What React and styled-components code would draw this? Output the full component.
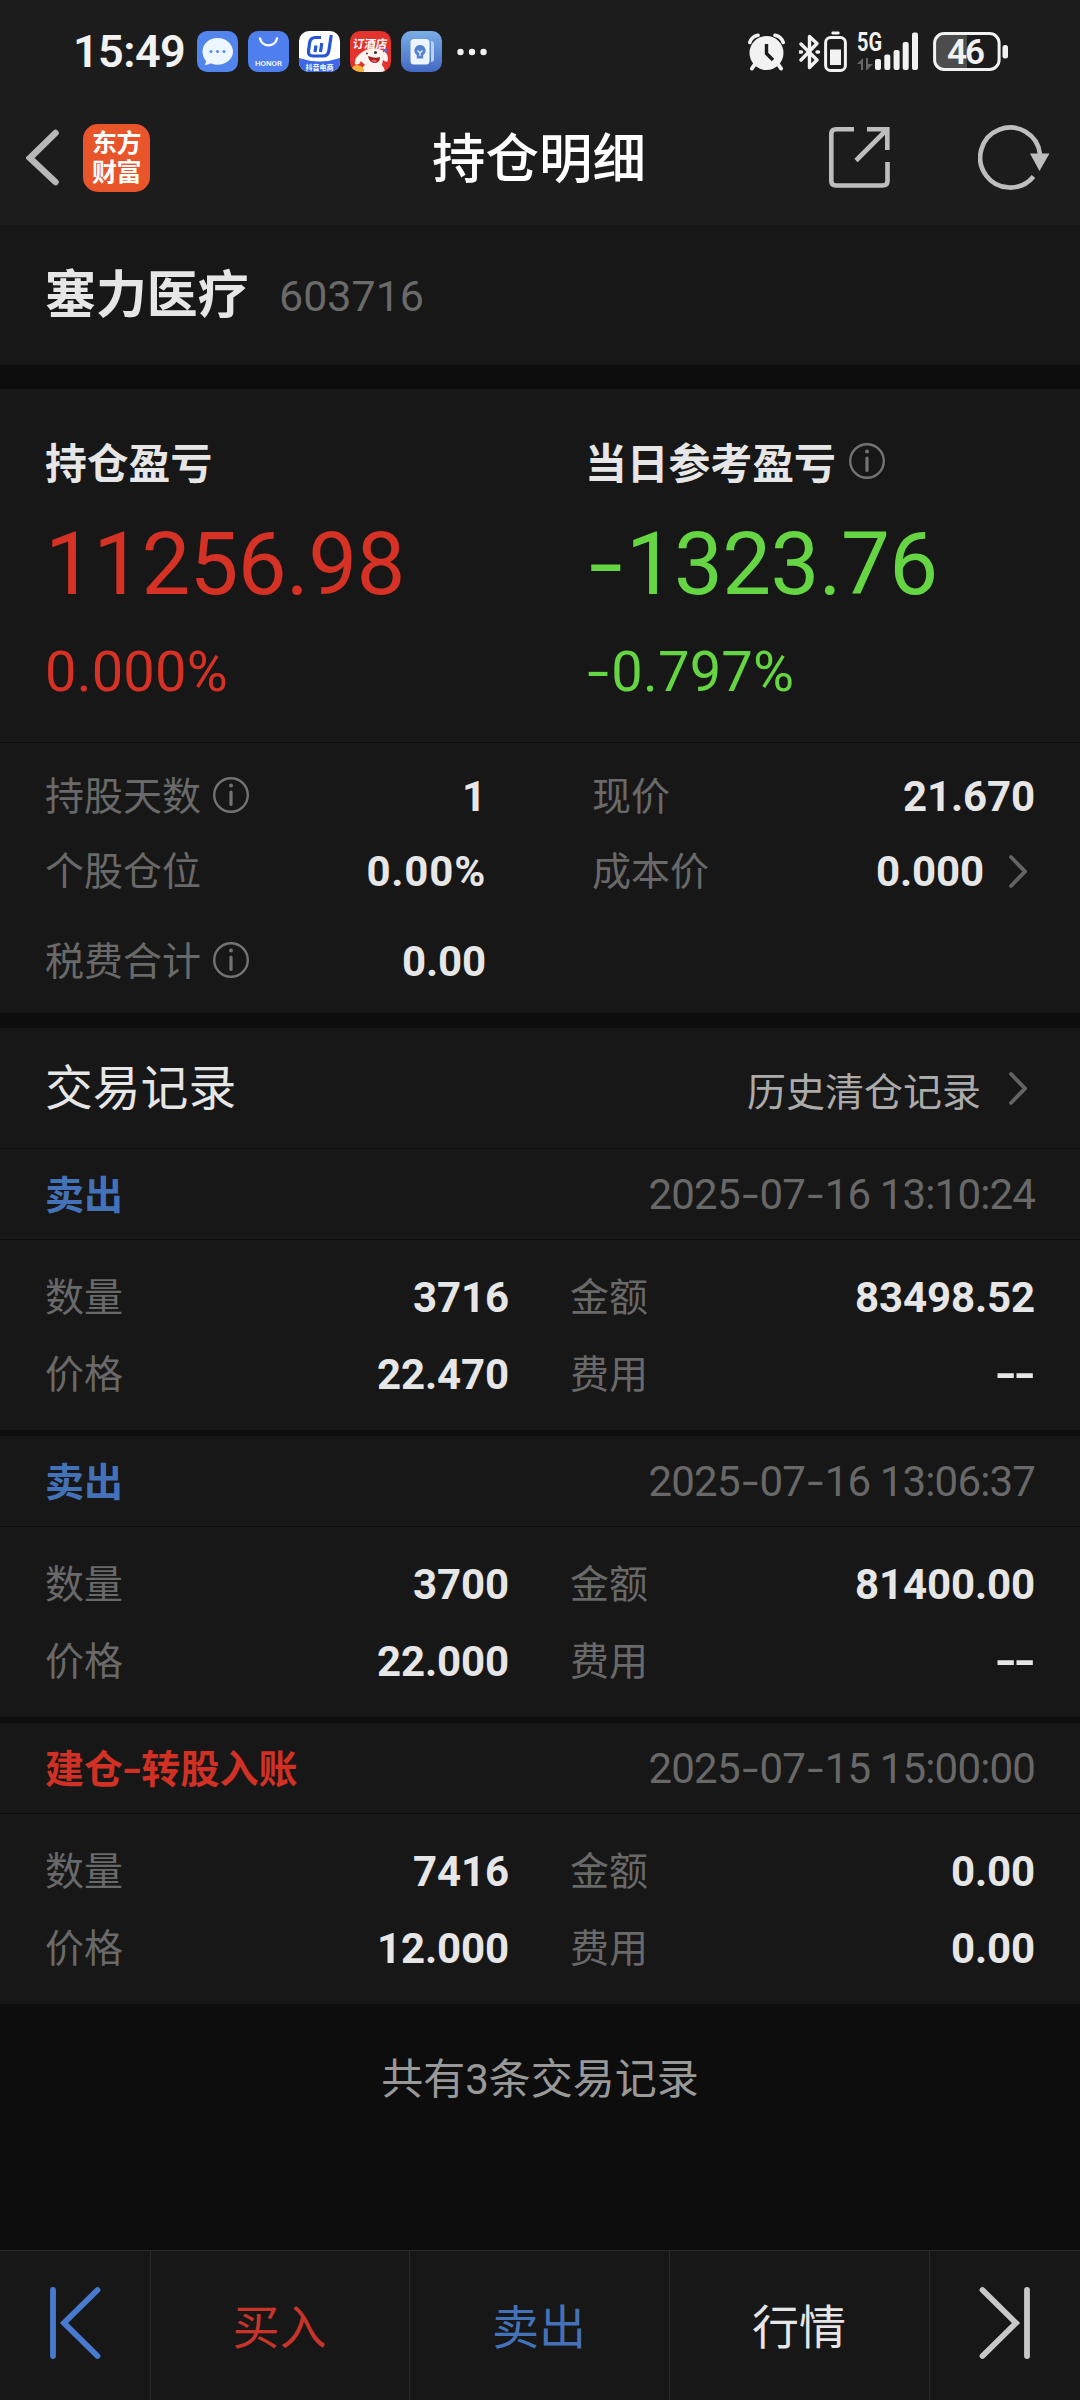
import React from 'react';
import styled, { createGlobalStyle } from 'styled-components'

const GlobalStyle = createGlobalStyle`
    * { box-sizing: border-box; }
    body {
        margin: 0;
        background: #0d0d0d;
        font-family: Roboto, "Noto Sans CJK SC", sans-serif;
        color: #e6e6e6;
    }
    svg { display: block; flex: none; }
`

const records = [
    { id: 1, type: '卖出', color: '#4472b8', time: '2025-07-16 13:10:24', count: '3716', amount: '83498.52', price: '22.470', fee: '--' },
    { id: 2, type: '卖出', color: '#4472b8', time: '2025-07-16 13:06:37', count: '3700', amount: '81400.00', price: '22.000', fee: '--' },
    { id: 3, type: '建仓-转股入账', color: '#d13024', time: '2025-07-15 15:00:00', count: '7416', amount: '0.00', price: '12.000', fee: '0.00' },
]

// Hyphens are drawn wider than Roboto has them
const withDash = (text) => text.split('').map((c, i) => (
    c === '-' ? <Dash key={i}>-</Dash> : c
))

function InfoIcon() {
    return (
        <svg width="36" height="38" viewBox="0 0 36 38" fill="none" stroke="#737373">
            <circle cx="18" cy="19" r="16.8" strokeWidth="2.4" />
            <path d="M18 16v12.5" strokeWidth="3.2" strokeLinecap="round" />
            <circle cx="18" cy="9.6" r="2" fill="#737373" stroke="none" />
        </svg>
    )
}

function Arrow() {
    return (
        <svg width="18" height="34" viewBox="0 0 18 34" fill="none" stroke="#636363" strokeWidth="3.8" strokeLinecap="round">
            <path d="M2 2L16 16.5L2 31" />
        </svg>
    )
}

function StatusBar() {
    return (
        <Status>
            <Clock>15:49</Clock>
            <Apps>
                <svg width="41" height="41" viewBox="0 0 41 41">
                    <rect width="41" height="41" rx="10" fill="#5284ee" />
                    <path d="M20.5 7C12 7 5.5 13 5.5 20.7c0 4 1.6 7 3.7 9.3-.2 1.5-.8 2.8-1.7 4 2.5 0 4.5-.7 6-1.7 2 .9 4.4 1.5 7 1.5 8.500 0 15.5-5.8 15.5-13.3S29 7 20.5 7z" fill="#eef6ff" />
                    <g fill="#5b8cf0"><circle cx="14" cy="20.5" r="1.6" /><circle cx="20.5" cy="20.5" r="1.6" /><circle cx="27" cy="20.5" r="1.6" /></g>
                </svg>
                <svg width="41" height="41" viewBox="0 0 41 41">
                    <rect width="41" height="41" rx="10" fill="#4f7fee" />
                    <path d="M12 7.5a8.7 8.7 0 0 0 17 0" fill="none" stroke="#fff" strokeWidth="2.4" strokeLinecap="round" />
                    <text x="20.5" y="35" textAnchor="middle" fontSize="7" fontWeight="500" fill="#fff" textLength="27" lengthAdjust="spacingAndGlyphs">HONOR</text>
                </svg>
                <svg width="41" height="41" viewBox="0 0 41 41">
                    <defs><clipPath id="shop"><rect width="41" height="41" rx="10" /></clipPath></defs>
                    <g clipPath="url(#shop)">
                        <rect width="41" height="41" fill="#fff" />
                        <path d="M0 27Q20.5 34 41 27V41H0z" fill="#3c68e8" />
                        <path d="M22 6.5H16.5Q11.5 6.5 10.7 11.5L9.5 20Q9 25 14 25H24Q29 25 29.8 20L32.3 4M17 14.5L16 21M22.8 12L21.5 21" fill="none" stroke="#2655d8" strokeWidth="3.2" />
                        <text x="20.5" y="38.5" textAnchor="middle" fontSize="7" fontWeight="700" fill="#fff">抖音电商</text>
                    </g>
                </svg>
                <svg width="41" height="41" viewBox="0 0 41 41">
                    <defs><clipPath id="dog"><rect width="41" height="41" rx="10" /></clipPath></defs>
                    <g clipPath="url(#dog)">
                        <rect width="41" height="41" fill="#e4322c" />
                        <text x="20" y="17" textAnchor="middle" fontSize="11.5" fontWeight="700" fill="#fff" transform="skewX(-8) translate(2 0)">订酒店</text>
                        <path d="M11 22q-7 5-6 11 4 2 6-3l4 4q-4 3-4 8h24q0-5-3-8l1-5q5 4 5-1 0-6-6-9-12-4-21 3z" fill="#fff4f0" />
                        <path d="M18 25q7 3 12 1 0 6-6 6-5-1-6-7z" fill="#a51e22" />
                        <path d="M21 29q4-1 6 1-2 3-6-1z" fill="#f4625f" />
                        <circle cx="17" cy="22.5" r="0.9" fill="#333" /><circle cx="25.5" cy="21.5" r="1.5" fill="#333" />
                        <path d="M2 41v-4q3-5 8-2 4 0 4 6z" fill="#f2b23e" />
                        <path d="M33 18l4 3m0-3l-4 3" stroke="#5d6fd0" strokeWidth="1.5" />
                    </g>
                </svg>
                <svg width="41" height="41" viewBox="0 0 41 41">
                    <defs><linearGradient id="tips" x2="0" y2="1"><stop stopColor="#7aaee6" /><stop offset="1" stopColor="#4369c4" /></linearGradient></defs>
                    <rect width="41" height="41" rx="10" fill="url(#tips)" />
                    <path d="M30 10q3 0 3 3v15q0 3-3 3z" fill="#b8d0f3" />
                    <rect x="9.5" y="8" width="19" height="25.5" rx="3.5" fill="#eef4ff" />
                    <path d="M19 14a5.5 5.5 0 0 0-3.2 10v3.5h6.4V24A5.5 5.5 0 0 0 19 14z" fill="#5581d0" />
                    <path d="M16.5 19.5l2.5 2.5 2.5-2.5M19 22v3" fill="none" stroke="#eef4ff" strokeWidth="1.2" />
                </svg>
            </Apps>
            <svg width="30" height="8" viewBox="0 0 30 8" fill="#f2f2f2">
                <circle cx="3.5" cy="4" r="3.2" /><circle cx="15" cy="4" r="3.2" /><circle cx="26.5" cy="4" r="3.2" />
            </svg>
            <Signals>
                <svg width="37" height="38" viewBox="0 0 37 38" fill="none" stroke="#f2f2f2">
                    <path d="M7 31l-3 4.5M30 31l3 4.5" strokeWidth="4" strokeLinecap="round" />
                    <circle cx="18.5" cy="20" r="17" fill="#f2f2f2" stroke="none" />
                    <path d="M1.8 9.5Q3.5 3.5 10 2.2M35.2 9.5Q33.5 3.5 27 2.2" strokeWidth="3.6" strokeLinecap="round" />
                    <path d="M18.5 11V20.5L25 27" stroke="#1c1c1c" strokeWidth="3.4" />
                </svg>
                <BluetoothBox>
                    <svg width="21" height="36" viewBox="0 0 21 36" fill="none" stroke="#f2f2f2" strokeWidth="3.4" strokeLinejoin="round" strokeLinecap="round">
                        <path d="M2 10L18 26L10.5 33.5V2.5L18 9.5L2 26M1 18h1.5M18 18h1.5" />
                    </svg>
                    <svg width="23" height="41" viewBox="0 0 23 41" fill="none">
                        <rect x="7.5" y="0.5" width="8" height="3" rx="1" fill="#f2f2f2" />
                        <rect x="1.6" y="6.5" width="19.8" height="33" rx="5" stroke="#f2f2f2" strokeWidth="3" />
                        <rect x="6" y="18.5" width="11" height="15.5" fill="#f2f2f2" />
                    </svg>
                </BluetoothBox>
                <svg width="62" height="55" viewBox="0 -8 62 55" fill="#f2f2f2">
                    <text x="0" y="19" fontSize="25.5" fontWeight="700" textLength="25" lengthAdjust="spacingAndGlyphs">5G</text>
                    <path d="M0 32l6-6v12H4v-6zM9 26h2v6h5l-6 6H9z" fill="#666" />
                    <rect x="18" y="27" width="6" height="11" rx="2" /><rect x="27.3" y="22.5" width="6" height="15.5" rx="2" />
                    <rect x="36.6" y="18" width="6" height="20" rx="2" /><rect x="45.7" y="10" width="6" height="28" rx="2" />
                    <rect x="55" y="0.5" width="6" height="37.5" rx="2" />
                </svg>
                <svg width="76" height="59" viewBox="0 -10 76 59">
                    <path d="M34 3H12Q3 3 3 12V27Q3 36 12 36H34z" fill="#4c4c4c" />
                    <rect x="1.6" y="1.6" width="64.5" height="35.8" rx="9.5" fill="none" stroke="#f2f2f2" strokeWidth="3" />
                    <rect x="69.5" y="13" width="5.5" height="13.5" rx="2.5" fill="#f2f2f2" />
                    <text x="33" y="32" textAnchor="middle" fontSize="35" fontWeight="600" fill="#f2f2f2" textLength="38">46</text>
                </svg>
            </Signals>
        </Status>
    )
}

function Header() {
    return (
        <NavBar>
            <NavSide>
                <svg width="33" height="58" viewBox="0 0 33 58" fill="none" stroke="#b8b8b8" strokeWidth="6.5" strokeLinecap="round">
                    <path d="M29.5 4L4 29L29.5 53" />
                </svg>
                <Logo><span>东方</span><span>财富</span></Logo>
            </NavSide>
            <PageTitle>持仓明细</PageTitle>
            <NavSide $right>
                <svg width="62" height="62" viewBox="0 0 62 62" fill="none" stroke="#bebebe" strokeWidth="4.6">
                    <path d="M25 2.3H7Q2.3 2.3 2.3 7V54Q2.3 58.5 7 58.5H53.5Q58.5 58.5 58.5 54V35" />
                    <path d="M38 2.3H58.3V23M57.5 3L27 33.5" />
                </svg>
                <svg width="72" height="66" viewBox="0 0 72 66">
                    <path d="M55.5 51.5A30 30 0 1 1 62 29" fill="none" stroke="#bebebe" strokeWidth="4.6" />
                    <path d="M52 28.5H71.5L61.5 46z" fill="#bebebe" />
                </svg>
            </NavSide>
        </NavBar>
    )
}

function App() {
    return (
        <>
            <GlobalStyle />
            <Page>
                <StatusBar />
                <Header />
                <Stock>
                    <StockName>塞力医疗</StockName>
                    <StockCode>603716</StockCode>
                </Stock>
                <Profit>
                    <ProfitCol $color="#d53124">
                        <ProfitLabel>持仓盈亏</ProfitLabel>
                        <ProfitValue>11256.98</ProfitValue>
                        <ProfitRate>0.000%</ProfitRate>
                    </ProfitCol>
                    <ProfitCol $color="#65d544">
                        <ProfitLabel>当日参考盈亏 <InfoIcon /></ProfitLabel>
                        <ProfitValue>{withDash('-1323.76')}</ProfitValue>
                        <ProfitRate>{withDash('-0.797%')}</ProfitRate>
                    </ProfitCol>
                </Profit>
                <Stats>
                    <StatsRow>
                        <Label>持股天数 <InfoIcon /></Label>
                        <Value>1</Value>
                        <Label>现价</Label>
                        <Value>21.670</Value>
                    </StatsRow>
                    <StatsRow>
                        <Label>个股仓位</Label>
                        <Value $spaced>0.00%</Value>
                        <Label>成本价</Label>
                        <Value>0.000 <ArrowBox><Arrow /></ArrowBox></Value>
                    </StatsRow>
                    <StatsRow $tall>
                        <Label>税费合计 <InfoIcon /></Label>
                        <Value>0.00</Value>
                    </StatsRow>
                </Stats>
                <RecordsHead>
                    <RecordsTitle>交易记录</RecordsTitle>
                    <History>历史清仓记录 <ArrowBox $wide><Arrow /></ArrowBox></History>
                </RecordsHead>
                {records.map((item) => (
                    <Card key={item.id}>
                        <CardHead>
                            <CardType $color={item.color}>{withDash(item.type)}</CardType>
                            <Time>{withDash(item.time)}</Time>
                        </CardHead>
                        <CardBody>
                            <Label>数量</Label>
                            <Value>{item.count}</Value>
                            <Label>金额</Label>
                            <Value>{item.amount}</Value>
                            <Label>价格</Label>
                            <Value>{item.price}</Value>
                            <Label>费用</Label>
                            <Value>{withDash(item.fee)}</Value>
                        </CardBody>
                    </Card>
                ))}
                <Total>共有3条交易记录</Total>
                <Toolbar>
                    <Tool>
                        <svg width="52" height="74" viewBox="0 0 52 74" fill="none" stroke="#487bd0" strokeWidth="5.8" strokeLinecap="round">
                            <path d="M4 4V70M48.5 4L15 37L48.5 70" />
                        </svg>
                    </Tool>
                    <Tool $color="#c9342a">买入</Tool>
                    <Tool $color="#4472b8">卖出</Tool>
                    <Tool $color="#e6e6e6">行情</Tool>
                    <Tool>
                        <svg width="52" height="74" viewBox="0 0 52 74" fill="none" stroke="#c8c8c8" strokeWidth="5.8" strokeLinecap="round">
                            <path d="M48 4V70M3.5 4L37 37L3.5 70" />
                        </svg>
                    </Tool>
                </Toolbar>
            </Page>
        </>
    )
}

const Page = styled.div`
    width: 1080px;
    height: 2400px;
    display: flex;
    flex-direction: column;
    overflow: hidden;
    background: #0d0d0d;
`

const Status = styled.div`
    height: 103px;
    flex: none;
    display: flex;
    align-items: center;
    padding: 0 71px 0 73px;
    background: #1c1c1c;
`

const Clock = styled.div`
    width: 124px;
    font-size: 45px;
    font-weight: 600;
    line-height: 50px;
    letter-spacing: -0.6px;
    color: #f2f2f2;
`

const Apps = styled.div`
    display: flex;
    gap: 10px;
    margin-right: 15px;
`

const Signals = styled.div`
    display: flex;
    align-items: center;
    gap: 14px;
    margin-left: auto;
`

const BluetoothBox = styled.div`
    display: flex;
    align-items: center;
    gap: 4px;
    margin-right: -4px;
`

const NavBar = styled.div`
    height: 122px;
    flex: none;
    display: grid;
    grid-template-columns: 1fr auto 1fr;
    align-items: center;
    padding: 0 30px 13px 26px;
    background: #1c1c1c;
`

const NavSide = styled.div`
    display: flex;
    align-items: center;
    justify-content: ${(props) => (props.$right ? 'flex-end' : 'flex-start')};
    gap: ${(props) => (props.$right ? '87px' : '24px')};
`

const Logo = styled.div`
    width: 67px;
    height: 68px;
    margin-top: 1px;
    border-radius: 15px;
    background: #e9552a;
    display: flex;
    flex-direction: column;
    align-items: center;
    justify-content: center;
    padding-bottom: 1px;
    font-size: 25px;
    font-weight: 700;
    line-height: 29px;
    letter-spacing: -0.5px;
    color: #fff;
`

const PageTitle = styled.h1`
    margin: 0;
    padding: 5px 0 0 2px;
    font-size: 53.5px;
    font-weight: 500;
    line-height: 60px;
    color: #fff;
`

const Stock = styled.div`
    height: 140px;
    flex: none;
    display: flex;
    align-items: center;
    padding: 2px 45px 0;
    background: #171717;
`

const StockName = styled.div`
    width: 234px;
    font-size: 50.9px;
    font-weight: 700;
    line-height: 60px;
`

const StockCode = styled.div`
    font-size: 43px;
    font-weight: 400;
    color: #6a6a6a;
`

const Profit = styled.div`
    height: 354px;
    flex: none;
    margin-top: 24px;
    display: grid;
    grid-template-columns: 540px 1fr;
    padding: 50px 45px 0;
    background: #171717;
    border-bottom: 1px solid #0d0d0d;
`

const ProfitCol = styled.div`
    color: ${(props) => props.$color};
`

const ProfitLabel = styled.div`
    display: flex;
    align-items: center;
    gap: 13px;
    height: 44px;
    font-size: 41.8px;
    font-weight: 700;
    color: #e6e6e6;
`

const ProfitValue = styled.div`
    margin-top: 31px;
    font-size: 87px;
    line-height: 100px;
    letter-spacing: -0.7px;
`

const ProfitRate = styled.div`
    margin-top: 28px;
    font-size: 56px;
    font-weight: 400;
    line-height: 60px;
    letter-spacing: 0.2px;
`

const Dash = styled.span`
    display: inline-block;
    width: 0.47em;
    text-align: center;
    transform: scaleX(1.4);
`

const Stats = styled.div`
    height: 270px;
    flex: none;
    padding: 16px 45px 0;
    background: #171717;
`

const StatsRow = styled.div`
    height: ${(props) => (props.$tall ? '105px' : '75px')};
    display: grid;
    grid-template-columns: 220px 221px 221px 1fr;
    align-items: center;

    & > :nth-child(3) {
        padding-left: 106px;
        margin-right: -106px;
    }
`

const Label = styled.div`
    display: flex;
    align-items: center;
    gap: 12px;
    white-space: nowrap;
    font-size: 39px;
    line-height: 44px;
    color: #696969;

    svg {
        margin-top: -3px;
    }
`

const Value = styled.div`
    display: flex;
    justify-content: flex-end;
    align-items: center;
    font-size: 42px;
    font-weight: 680;
    line-height: 44px;
    letter-spacing: ${(props) => (props.$spaced ? '0.8px' : '-0.1px')};
`

const ArrowBox = styled.span`
    width: ${(props) => (props.$wide ? '54px' : '51px')};
    padding-left: ${(props) => (props.$wide ? '28px' : '25px')};
`

const RecordsHead = styled.div`
    height: 121px;
    flex: none;
    margin-top: 15px;
    display: flex;
    justify-content: space-between;
    align-items: center;
    padding: 2px 45px 0;
    background: #171717;
    border-bottom: 1px solid #0d0d0d;
`

const RecordsTitle = styled.h2`
    margin: 0;
    font-size: 47.8px;
    font-weight: 400;
    line-height: 60px;
`

const History = styled.div`
    display: flex;
    align-items: center;
    font-size: 39px;
    color: #ababab;
`

const Card = styled.div`
    height: 281px;
    flex: none;
    background: #171717;

    & + & {
        margin-top: 6px;
    }
`

const CardHead = styled.div`
    height: 91px;
    display: flex;
    justify-content: space-between;
    align-items: center;
    padding: 0 45px;
    border-bottom: 1px solid #0d0d0d;
`

const CardType = styled.div`
    padding-bottom: 5px;
    font-size: 39px;
    font-weight: 700;
    color: ${(props) => props.$color};
`

const Time = styled.div`
    font-size: 42px;
    font-weight: 400;
    letter-spacing: -0.85px;
    color: #686868;
`

const CardBody = styled.div`
    display: grid;
    grid-template-columns: 200px 264px 200px 1fr;
    grid-auto-rows: 77px;
    align-items: center;
    padding: 19px 45px 0;

    & > :nth-child(4n + 3) {
        padding-left: 61px;
    }
`

const Total = styled.div`
    padding-top: 46px;
    text-align: center;
    font-size: 42px;
    line-height: 60px;
    color: #999;
`

const Toolbar = styled.div`
    height: 150px;
    flex: none;
    margin-top: auto;
    display: grid;
    grid-template-columns: 150px 259px 260px 260px 151px;
    border-top: 1px solid #2a2a2a;
    background: #171717;
`

const Tool = styled.div`
    display: flex;
    align-items: center;
    justify-content: center;
    padding: 0 1px 5px 0;
    font-size: 47px;
    color: ${(props) => props.$color};

    & + & {
        border-left: 1px solid #2a2a2a;
    }
`

export default App;
